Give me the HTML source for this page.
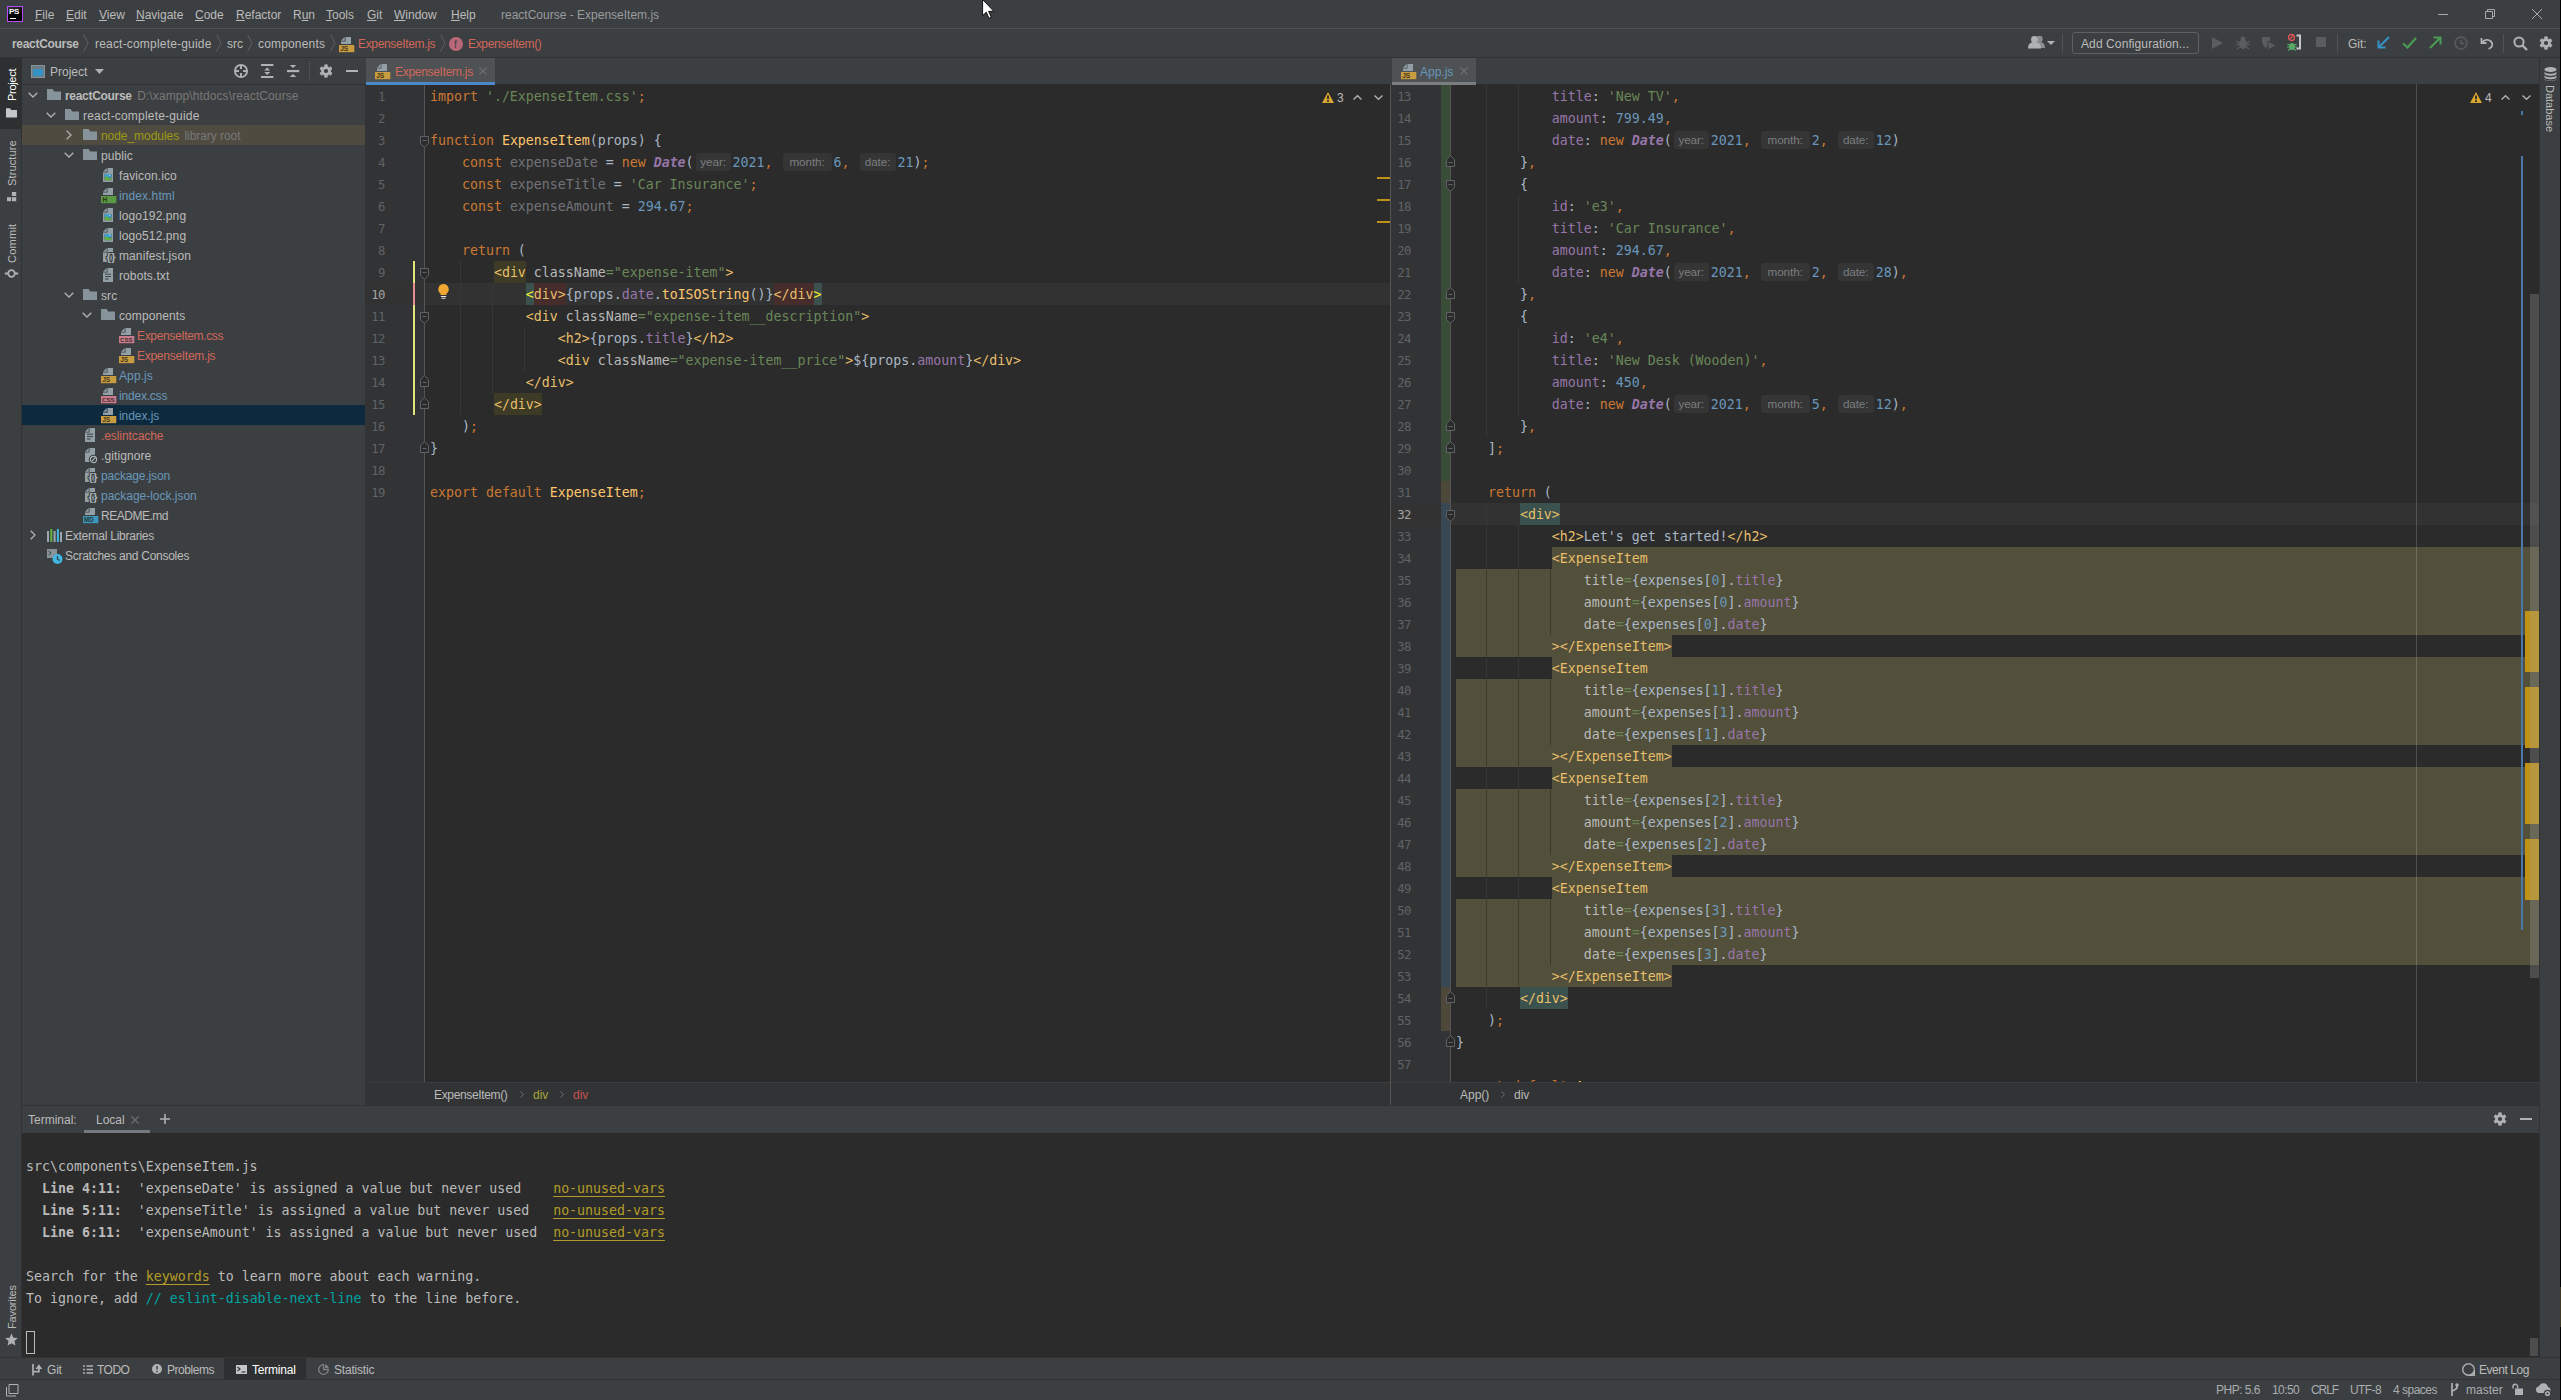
<!DOCTYPE html><html><head><meta charset="utf-8"><title>reactCourse - ExpenseItem.js</title><style>
*{box-sizing:border-box;margin:0;padding:0}
html,body{width:2561px;height:1400px;overflow:hidden;background:#3c3f41}
body{position:relative;font-family:"Liberation Sans",sans-serif;font-size:12px;color:#bbbbbb;line-height:1}
.a{position:absolute}
.t{position:absolute;white-space:pre;line-height:16px;height:16px}
.mono{font-family:"Liberation Mono",monospace;font-size:13.333px}
.cl{position:absolute;white-space:pre;font-family:"DejaVu Sans Mono","Liberation Mono",monospace;font-size:13.288px;line-height:22px;height:22px;color:#a9b7c6;padding-top:1px}
.ln{position:absolute;white-space:pre;font-family:"DejaVu Sans Mono","Liberation Mono",monospace;font-size:12.3px;line-height:22px;height:22px;color:#606366;text-align:right;padding-top:1px;letter-spacing:-0.5px}
.k{color:#cc7832}.s{color:#6a8759}.n{color:#6897bb}.f{color:#ffc66d}.p{color:#9876aa}.tg{color:#e8bf6a}
.u{color:#72737a}.at{color:#bababa}.g{color:#9876aa;font-style:italic;font-weight:bold}
.h{display:inline-block;vertical-align:top;margin:1px 2px 0 2px;height:18px;line-height:17px;border-radius:3px;background:#353535;color:#7c7e80;font-family:"Liberation Sans",sans-serif;font-size:11.7px;letter-spacing:-0.1px;text-align:center;overflow:hidden}
.tr{position:absolute;white-space:pre;line-height:20px;height:20px;font-size:12px;letter-spacing:0.1px}
svg{position:absolute;overflow:visible}
</style></head><body><div class="a" style="left:0px;top:0px;width:2561px;height:28px;background:#3c3f41;"></div><div class="a" style="left:0px;top:28px;width:2561px;height:1px;background:#515151;"></div><div class="a" style="left:0px;top:29px;width:2561px;height:28px;background:#3c3f41;"></div><div class="a" style="left:0px;top:57px;width:2561px;height:1px;background:#323232;"></div><div class="a" style="left:7px;top:6px;width:16px;height:16px;background:linear-gradient(160deg,#3a3a3a 0%,#000 55%);border:1px solid #b74af7"></div><div class="t" style="left:9px;top:7px;color:#ffffff;font-size:8px;font-weight:bold;line-height:9px;height:9px;letter-spacing:-0.3px">PS</div><div class="a" style="left:10px;top:18px;width:6px;height:1px;background:#ffffff;"></div><div class="t" style="left:35px;top:7px;color:#bbbbbb;"><u>F</u>ile</div><div class="t" style="left:66px;top:7px;color:#bbbbbb;"><u>E</u>dit</div><div class="t" style="left:99px;top:7px;color:#bbbbbb;"><u>V</u>iew</div><div class="t" style="left:136px;top:7px;color:#bbbbbb;"><u>N</u>avigate</div><div class="t" style="left:195px;top:7px;color:#bbbbbb;"><u>C</u>ode</div><div class="t" style="left:236px;top:7px;color:#bbbbbb;"><u>R</u>efactor</div><div class="t" style="left:293px;top:7px;color:#bbbbbb;">R<u>u</u>n</div><div class="t" style="left:326px;top:7px;color:#bbbbbb;"><u>T</u>ools</div><div class="t" style="left:367px;top:7px;color:#bbbbbb;"><u>G</u>it</div><div class="t" style="left:394px;top:7px;color:#bbbbbb;"><u>W</u>indow</div><div class="t" style="left:451px;top:7px;color:#bbbbbb;"><u>H</u>elp</div><div class="t" style="left:501px;top:7px;color:#999c9e;">reactCourse - ExpenseItem.js</div><div class="a" style="left:2438px;top:14px;width:10px;height:1px;background:#a8aaab;"></div><svg style="left:2485px;top:9px" width="10" height="10" viewBox="0 0 10 10"><path d="M0.5 2.5h7v7h-7z M2.5 2.5v-2h7v7h-2" fill="none" stroke="#a8aaab" stroke-width="1"/></svg><svg style="left:2532px;top:9px" width="10" height="10" viewBox="0 0 10 10"><path d="M0 0L10 10M10 0L0 10" fill="none" stroke="#a8aaab" stroke-width="1"/></svg><div class="t" style="left:12px;top:36px;color:#bbbbbb;font-weight:bold;letter-spacing:-0.3px">reactCourse</div><svg style="left:83px;top:34px" width="6" height="18" viewBox="0 0 6 18"><path d="M0.5 0.5L5 9L0.5 17.5" fill="none" stroke="#5d6163" stroke-width="1"/></svg><div class="t" style="left:95px;top:36px;color:#bbbbbb;letter-spacing:0.19px">react-complete-guide</div><svg style="left:216px;top:34px" width="6" height="18" viewBox="0 0 6 18"><path d="M0.5 0.5L5 9L0.5 17.5" fill="none" stroke="#5d6163" stroke-width="1"/></svg><div class="t" style="left:227px;top:36px;color:#bbbbbb;">src</div><svg style="left:247px;top:34px" width="6" height="18" viewBox="0 0 6 18"><path d="M0.5 0.5L5 9L0.5 17.5" fill="none" stroke="#5d6163" stroke-width="1"/></svg><div class="t" style="left:258px;top:36px;color:#bbbbbb;letter-spacing:0.17px">components</div><svg style="left:330px;top:34px" width="6" height="18" viewBox="0 0 6 18"><path d="M0.5 0.5L5 9L0.5 17.5" fill="none" stroke="#5d6163" stroke-width="1"/></svg><svg style="left:339px;top:37px" width="16" height="16" viewBox="0 0 16 16"><path d="M5.700 0L2 3.700h3.700z" fill="#929fa7"/><path d="M6.500 0h5.500v7H2V4.500h4.500z" fill="#929fa7"/><rect x="0" y="8" width="15.300" height="7.200" fill="#c99c3f"/><text x="1.2" y="14.100" font-family="Liberation Sans,sans-serif" font-size="6.6" font-weight="bold" fill="#2b2418" opacity=".85">JS</text></svg><div class="t" style="left:358px;top:36px;color:#d1675a;letter-spacing:-0.35px">ExpenseItem.js</div><svg style="left:440px;top:34px" width="6" height="18" viewBox="0 0 6 18"><path d="M0.5 0.5L5 9L0.5 17.5" fill="none" stroke="#5d6163" stroke-width="1"/></svg><svg style="left:449px;top:37px" width="14" height="14" viewBox="0 0 14 14"><circle cx="7" cy="7" r="7" fill="#b9687a"/><text x="5" y="10.5" font-family="Liberation Sans,sans-serif" font-size="10" fill="#3c3f41">f</text></svg><div class="t" style="left:468px;top:36px;color:#d1675a;letter-spacing:-0.35px">ExpenseItem()</div><svg style="left:2028px;top:35px" width="18" height="14" viewBox="0 0 18 14"><circle cx="11.5" cy="4" r="3.2" fill="#8b8e90"/><path d="M6 13c0-4 2-6 5.5-6s5.5 2 5.5 6z" fill="#8b8e90"/><circle cx="6.5" cy="4.5" r="3.4" fill="#afb1b3"/><path d="M0 13.5c0-4.5 2.5-6.5 6.5-6.5s6.500 2 6.500 6.500z" fill="#afb1b3"/></svg><svg style="left:2047px;top:41px" width="8" height="4" viewBox="0 0 8 4"><path d="M0 0h8L4 4z" fill="#afb1b3"/></svg><div class="a" style="left:2062px;top:34px;width:1px;height:19px;background:#515456;"></div><div class="a" style="left:2072px;top:32px;width:127px;height:22px;border:1px solid #5e6060;border-radius:3px"></div><div class="t" style="left:2081px;top:36px;color:#bbbbbb;letter-spacing:0.1px">Add Configuration...</div><svg style="left:2212px;top:37px" width="11" height="12" viewBox="0 0 11 12"><path d="M0 0L11 6L0 12z" fill="#5a5d5f"/></svg><svg style="left:2236px;top:36px" width="14" height="14" viewBox="0 0 14 14"><ellipse cx="7" cy="8" rx="4" ry="5" fill="#5a5d5f"/><circle cx="7" cy="3" r="2.4" fill="#5a5d5f"/><path d="M0 5l3 2M14 5l-3 2M0 8.500h14M1 13l2.500-2M13 13l-2.500-2" stroke="#5a5d5f" stroke-width="1.200" fill="none"/></svg><svg style="left:2261px;top:36px" width="15" height="14" viewBox="0 0 15 14"><path d="M1 1h8v5L5 12C2 10 1 7 1 4z" fill="#5a5d5f"/><path d="M7 5l8 4.500L7 14z" fill="#5a5d5f" stroke="#3c3f41" stroke-width="1"/></svg><svg style="left:2287px;top:34px" width="15" height="17" viewBox="0 0 15 17"><circle cx="4.500" cy="3.500" r="3" fill="none" stroke="#e05555" stroke-width="1.300"/><path d="M2.500 5.500l4-4" stroke="#e05555" stroke-width="1.200"/><ellipse cx="5" cy="12.500" rx="3" ry="3.500" fill="#59a869"/><path d="M0.500 10l2.500 1.500M9.500 10L7 11.500M0 13h10M1 16.500l2-1.500M9 16.500L7 15" stroke="#59a869" stroke-width="1.100" fill="none"/><path d="M9.500 1.500h3.500v13H9.500" fill="none" stroke="#c4c6c7" stroke-width="2"/></svg><div class="a" style="left:2316px;top:37px;width:10px;height:10px;background:#5a5d5f;"></div><div class="a" style="left:2337px;top:34px;width:1px;height:19px;background:#515456;"></div><div class="t" style="left:2348px;top:36px;color:#bbbbbb;">Git:</div><svg style="left:2377px;top:36px" width="13" height="13" viewBox="0 0 13 13"><path d="M12 1L2.500 10.500M1.500 4.500V11.500H8.500" fill="none" stroke="#3592c4" stroke-width="2"/></svg><svg style="left:2402px;top:37px" width="15" height="12" viewBox="0 0 15 12"><path d="M1 6.500L5.500 10.500L14 1" fill="none" stroke="#499c54" stroke-width="2.200"/></svg><svg style="left:2429px;top:36px" width="13" height="13" viewBox="0 0 13 13"><path d="M1 12L10.500 2.500M4.500 1.500H11.500V8.500" fill="none" stroke="#499c54" stroke-width="2"/></svg><svg style="left:2454px;top:36px" width="14" height="14" viewBox="0 0 14 14"><circle cx="7" cy="7" r="6" fill="none" stroke="#5a5d5f" stroke-width="1.500"/><path d="M7 3.500V7.500H10.500" fill="none" stroke="#5a5d5f" stroke-width="1.300"/></svg><svg style="left:2480px;top:36px" width="14" height="14" viewBox="0 0 14 14"><path d="M1.500 2v5h5" fill="none" stroke="#afb1b3" stroke-width="1.800"/><path d="M2 6.500C4 3.500 8.500 3 11 5.500S12.500 12 8.500 12.800" fill="none" stroke="#afb1b3" stroke-width="1.800"/></svg><div class="a" style="left:2503px;top:34px;width:1px;height:19px;background:#515456;"></div><svg style="left:2513px;top:36px" width="15" height="15" viewBox="0 0 15 15"><circle cx="6" cy="6" r="4.600" fill="none" stroke="#afb1b3" stroke-width="2"/><path d="M9.500 9.500L14 14" stroke="#afb1b3" stroke-width="2.400"/></svg><svg style="left:2539px;top:36px" width="14" height="14" viewBox="0 0 14 14"><path d="M5.67 2.60L5.69 0.84L8.31 0.84L8.33 2.60L10.15 3.65L11.68 2.78L12.99 5.05L11.48 5.95L11.48 8.05L12.99 8.95L11.68 11.22L10.15 10.35L8.33 11.40L8.31 13.16L5.69 13.16L5.67 11.40L3.85 10.35L2.32 11.22L1.01 8.95L2.52 8.05L2.52 5.95L1.01 5.05L2.32 2.78L3.85 3.65z" fill="#afb1b3" stroke="#afb1b3" stroke-width="0.8" stroke-linejoin="round"/><circle cx="7" cy="7" r="2.1" fill="#3c3f41"/></svg><div class="a" style="left:0px;top:58px;width:21px;height:1300px;background:#3c3f41;"></div><div class="a" style="left:21px;top:58px;width:1px;height:1300px;background:#323232;"></div><div class="a" style="left:0px;top:58px;width:22px;height:71px;background:#2d2f30;"></div><div class="t" style="left:12px;top:101px;color:#ffffff;transform-origin:0 0;transform:rotate(-90deg) translateY(-8px);font-size:11px;letter-spacing:-0.3px">Project</div><svg style="left:6px;top:108px" width="11" height="10" viewBox="0 0 11 10"><path d="M0 0.300h4l1.300 1.700H11V9.500H0z" fill="#c4c6c7"/></svg><div class="t" style="left:12px;top:186px;color:#bbbbbb;transform-origin:0 0;transform:rotate(-90deg) translateY(-8px);font-size:11px;letter-spacing:0.13px">Structure</div><svg style="left:7px;top:192px" width="10" height="10" viewBox="0 0 10 10"><rect x="4.900" y="0" width="4.300" height="4" fill="#afb1b3"/><rect x="0" y="5.200" width="4.100" height="4" fill="#afb1b3"/><rect x="4.900" y="5.200" width="4.300" height="4" fill="#afb1b3"/></svg><div class="t" style="left:12px;top:263px;color:#bbbbbb;transform-origin:0 0;transform:rotate(-90deg) translateY(-8px);font-size:11px;letter-spacing:0.25px">Commit</div><svg style="left:4px;top:268px" width="15" height="11" viewBox="0 0 15 11"><circle cx="7.500" cy="5.500" r="3.300" fill="none" stroke="#afb1b3" stroke-width="1.800"/><path d="M0.800 5.500h3.400M10.800 5.500h3.400" stroke="#afb1b3" stroke-width="1.800"/></svg><div class="t" style="left:12px;top:1329px;color:#bbbbbb;transform-origin:0 0;transform:rotate(-90deg) translateY(-8px);font-size:11px;letter-spacing:-0.15px">Favorites</div><svg style="left:5px;top:1333px" width="13" height="13" viewBox="0 0 14 14"><path d="M7 0.500l2 4.500 4.800 0.500-3.600 3.200 1 4.800L7 11l-4.200 2.500 1-4.800L0.200 5.500 5 5z" fill="#afb1b3"/></svg><div class="a" style="left:22px;top:58px;width:343px;height:27px;background:#3c3f41;"></div><div class="a" style="left:22px;top:84px;width:343px;height:1px;background:#323232;"></div><div class="a" style="left:22px;top:85px;width:343px;height:1020px;background:#3c3f41;"></div><svg style="left:31px;top:65px" width="14" height="13" viewBox="0 0 14 13"><rect x="0.500" y="0.500" width="13" height="12" fill="#6e7a82" stroke="#87939a"/><rect x="2" y="4" width="10" height="7" fill="#3592c4"/></svg><div class="t" style="left:50px;top:64px;color:#bbbbbb;">Project</div><svg style="left:95px;top:69px" width="9" height="5" viewBox="0 0 9 5"><path d="M0 0h9L4.500 5z" fill="#afb1b3"/></svg><svg style="left:234px;top:64px" width="14" height="14" viewBox="0 0 14 14"><circle cx="7" cy="7" r="6.100" fill="none" stroke="#afb1b3" stroke-width="1.900"/><path d="M7 1v4M7 9v4M1 7h4M9 7h4" stroke="#afb1b3" stroke-width="2"/></svg><svg style="left:261px;top:64px" width="12" height="14" viewBox="0 0 12 14"><path d="M0 1.100h12.400M0 13h12.400" stroke="#afb1b3" stroke-width="2"/><path d="M6.200 3.500L9.200 6.400H3.200z M6.200 10.900L9.200 8H3.200z" fill="#afb1b3"/></svg><svg style="left:287px;top:64px" width="12" height="14" viewBox="0 0 12 14"><path d="M0 7.050h12.200" stroke="#afb1b3" stroke-width="2.200"/><path d="M6 4.100L9.300 1H2.700z M6 10L9.300 13.100H2.700z" fill="#afb1b3"/></svg><div class="a" style="left:309px;top:61px;width:1px;height:20px;background:#4b4e50;"></div><svg style="left:319px;top:64px" width="14" height="14" viewBox="0 0 14 14"><path d="M5.67 2.60L5.69 0.84L8.31 0.84L8.33 2.60L10.15 3.65L11.68 2.78L12.99 5.05L11.48 5.95L11.48 8.05L12.99 8.95L11.68 11.22L10.15 10.35L8.33 11.40L8.31 13.16L5.69 13.16L5.67 11.40L3.85 10.35L2.32 11.22L1.01 8.95L2.52 8.05L2.52 5.95L1.01 5.05L2.32 2.78L3.85 3.65z" fill="#afb1b3" stroke="#afb1b3" stroke-width="0.8" stroke-linejoin="round"/><circle cx="7" cy="7" r="2.1" fill="#3c3f41"/></svg><div class="a" style="left:346px;top:70px;width:12px;height:2px;background:#afb1b3;"></div><svg style="left:28px;top:92px" width="10" height="6" viewBox="0 0 10 6"><path d="M0.7 0.7L5 5L9.3 0.7" fill="none" stroke="#afb1b3" stroke-width="1.3"/></svg><svg style="left:47px;top:88px" width="16" height="16" viewBox="0 0 16 16"><path d="M0 1h5.600l1.600 2.600H14V12H0z" fill="#87939a"/></svg><div class="tr" style="left:65px;top:86px;color:#bbbbbb;"><b style="letter-spacing:-0.3px">reactCourse</b><span style="color:#787878;margin-left:2px"> D:\xampp\htdocs\reactCourse</span></div><svg style="left:46px;top:112px" width="10" height="6" viewBox="0 0 10 6"><path d="M0.7 0.7L5 5L9.3 0.7" fill="none" stroke="#afb1b3" stroke-width="1.3"/></svg><svg style="left:65px;top:108px" width="16" height="16" viewBox="0 0 16 16"><path d="M0 1h5.600l1.600 2.600H14V12H0z" fill="#87939a"/></svg><div class="tr" style="left:83px;top:106px;color:#bbbbbb;letter-spacing:0.19px">react-complete-guide</div><div class="a" style="left:22px;top:125px;width:343px;height:20px;background:#4f4b41;"></div><svg style="left:66px;top:130px" width="6" height="10" viewBox="0 0 6 10"><path d="M0.7 0.7L5 5L0.7 9.3" fill="none" stroke="#afb1b3" stroke-width="1.3"/></svg><svg style="left:83px;top:128px" width="16" height="16" viewBox="0 0 16 16"><path d="M0 1h5.600l1.600 2.600H14V12H0z" fill="#87939a"/></svg><div class="tr" style="left:101px;top:126px;color:#9c9b14;letter-spacing:-0.05px">node_modules<span style="color:#787878;margin-left:2px"> library root</span></div><svg style="left:64px;top:152px" width="10" height="6" viewBox="0 0 10 6"><path d="M0.7 0.7L5 5L9.3 0.7" fill="none" stroke="#afb1b3" stroke-width="1.3"/></svg><svg style="left:83px;top:148px" width="16" height="16" viewBox="0 0 16 16"><path d="M0 1h5.600l1.600 2.600H14V12H0z" fill="#87939a"/></svg><div class="tr" style="left:101px;top:146px;color:#bbbbbb;">public</div><svg style="left:101px;top:168px" width="16" height="16" viewBox="0 0 16 16"><path d="M5.700 0L2 3.700h3.700z" fill="#929fa7"/><path d="M6.500 0h5.500v14H2V4.500h4.500z" fill="#929fa7"/><rect x="3" y="5" width="8" height="8" fill="#929fa7"/><rect x="3.700" y="6" width="6.600" height="6.200" fill="#3c3f41"/><rect x="3.700" y="6" width="6.600" height="3.600" fill="#3a9fd0"/><path d="M3.700 12.200V9.500c1.500-1.300 2.500-1.300 3.500-0.300 1 0.900 2 1 3.100 0.200v2.800z" fill="#5fae45"/><circle cx="8.500" cy="7.300" r="0.700" fill="#a5d6ee"/></svg><div class="tr" style="left:119px;top:166px;color:#bbbbbb;">favicon.ico</div><svg style="left:101px;top:188px" width="16" height="16" viewBox="0 0 16 16"><path d="M5.700 0L2 3.700h3.700z" fill="#929fa7"/><path d="M6.500 0h5.500v7H2V4.500h4.500z" fill="#929fa7"/><rect x="0" y="8" width="15.300" height="7.200" fill="#5a9a42"/><text x="1.6" y="14.100" font-family="Liberation Sans,sans-serif" font-size="6.6" font-weight="bold" fill="#2b2418" opacity=".85">H</text></svg><div class="tr" style="left:119px;top:186px;color:#6897bb;">index.html</div><svg style="left:101px;top:208px" width="16" height="16" viewBox="0 0 16 16"><path d="M5.700 0L2 3.700h3.700z" fill="#929fa7"/><path d="M6.500 0h5.500v14H2V4.500h4.500z" fill="#929fa7"/><rect x="3" y="5" width="8" height="8" fill="#929fa7"/><rect x="3.700" y="6" width="6.600" height="6.200" fill="#3c3f41"/><rect x="3.700" y="6" width="6.600" height="3.600" fill="#3a9fd0"/><path d="M3.700 12.200V9.500c1.500-1.300 2.500-1.300 3.500-0.300 1 0.900 2 1 3.100 0.200v2.800z" fill="#5fae45"/><circle cx="8.500" cy="7.300" r="0.700" fill="#a5d6ee"/></svg><div class="tr" style="left:119px;top:206px;color:#bbbbbb;">logo192.png</div><svg style="left:101px;top:228px" width="16" height="16" viewBox="0 0 16 16"><path d="M5.700 0L2 3.700h3.700z" fill="#929fa7"/><path d="M6.500 0h5.500v14H2V4.500h4.500z" fill="#929fa7"/><rect x="3" y="5" width="8" height="8" fill="#929fa7"/><rect x="3.700" y="6" width="6.600" height="6.200" fill="#3c3f41"/><rect x="3.700" y="6" width="6.600" height="3.600" fill="#3a9fd0"/><path d="M3.700 12.200V9.500c1.500-1.300 2.500-1.300 3.500-0.300 1 0.900 2 1 3.100 0.200v2.800z" fill="#5fae45"/><circle cx="8.500" cy="7.300" r="0.700" fill="#a5d6ee"/></svg><div class="tr" style="left:119px;top:226px;color:#bbbbbb;">logo512.png</div><svg style="left:101px;top:248px" width="16" height="16" viewBox="0 0 16 16"><path d="M5.700 0L2 3.700h3.700z" fill="#929fa7"/><path d="M6.500 0h5.500v14H2V4.500h4.500z" fill="#929fa7"/><text x="5.400" y="13.200" font-family="Liberation Sans,sans-serif" font-size="11" font-weight="bold" fill="#aab5bc" stroke="#3c3f41" stroke-width="2.200" paint-order="stroke" letter-spacing="0.500">{}</text></svg><div class="tr" style="left:119px;top:246px;color:#bbbbbb;">manifest.json</div><svg style="left:101px;top:268px" width="16" height="16" viewBox="0 0 16 16"><path d="M5.700 0L2 3.700h3.700z" fill="#929fa7"/><path d="M6.500 0h5.500v14H2V4.500h4.500z" fill="#929fa7"/><path d="M4 6.200h6M4 8.600h6M4 11h3.600" stroke="#3c3f41" stroke-width="1" fill="none"/></svg><div class="tr" style="left:119px;top:266px;color:#bbbbbb;">robots.txt</div><svg style="left:64px;top:292px" width="10" height="6" viewBox="0 0 10 6"><path d="M0.7 0.7L5 5L9.3 0.7" fill="none" stroke="#afb1b3" stroke-width="1.3"/></svg><svg style="left:83px;top:288px" width="16" height="16" viewBox="0 0 16 16"><path d="M0 1h5.600l1.600 2.600H14V12H0z" fill="#87939a"/></svg><div class="tr" style="left:101px;top:286px;color:#bbbbbb;">src</div><svg style="left:82px;top:312px" width="10" height="6" viewBox="0 0 10 6"><path d="M0.7 0.7L5 5L9.3 0.7" fill="none" stroke="#afb1b3" stroke-width="1.3"/></svg><svg style="left:101px;top:308px" width="16" height="16" viewBox="0 0 16 16"><path d="M0 1h5.600l1.600 2.600H14V12H0z" fill="#87939a"/></svg><div class="tr" style="left:119px;top:306px;color:#bbbbbb;">components</div><svg style="left:119px;top:328px" width="16" height="16" viewBox="0 0 16 16"><path d="M5.700 0L2 3.700h3.700z" fill="#929fa7"/><path d="M6.500 0h5.500v7H2V4.500h4.500z" fill="#929fa7"/><rect x="0" y="8" width="15.300" height="7.200" fill="#c87b8c"/><text x="1.0" y="14.100" font-family="Liberation Sans,sans-serif" font-size="6.1" font-weight="bold" fill="#2b2418" opacity=".85">CSS</text></svg><div class="tr" style="left:137px;top:326px;color:#d1675a;letter-spacing:-0.35px">ExpenseItem.css</div><svg style="left:119px;top:348px" width="16" height="16" viewBox="0 0 16 16"><path d="M5.700 0L2 3.700h3.700z" fill="#929fa7"/><path d="M6.500 0h5.500v7H2V4.500h4.500z" fill="#929fa7"/><rect x="0" y="8" width="15.300" height="7.200" fill="#c99c3f"/><text x="1.2" y="14.100" font-family="Liberation Sans,sans-serif" font-size="6.6" font-weight="bold" fill="#2b2418" opacity=".85">JS</text></svg><div class="tr" style="left:137px;top:346px;color:#d1675a;letter-spacing:-0.27px">ExpenseItem.js</div><svg style="left:101px;top:368px" width="16" height="16" viewBox="0 0 16 16"><path d="M5.700 0L2 3.700h3.700z" fill="#929fa7"/><path d="M6.500 0h5.500v7H2V4.500h4.500z" fill="#929fa7"/><rect x="0" y="8" width="15.300" height="7.200" fill="#c99c3f"/><text x="1.2" y="14.100" font-family="Liberation Sans,sans-serif" font-size="6.6" font-weight="bold" fill="#2b2418" opacity=".85">JS</text></svg><div class="tr" style="left:119px;top:366px;color:#6897bb;">App.js</div><svg style="left:101px;top:388px" width="16" height="16" viewBox="0 0 16 16"><path d="M5.700 0L2 3.700h3.700z" fill="#929fa7"/><path d="M6.500 0h5.500v7H2V4.500h4.500z" fill="#929fa7"/><rect x="0" y="8" width="15.300" height="7.200" fill="#c87b8c"/><text x="1.0" y="14.100" font-family="Liberation Sans,sans-serif" font-size="6.1" font-weight="bold" fill="#2b2418" opacity=".85">CSS</text></svg><div class="tr" style="left:119px;top:386px;color:#6897bb;letter-spacing:-0.2px">index.css</div><div class="a" style="left:22px;top:405px;width:343px;height:20px;background:#0d293e;"></div><svg style="left:101px;top:408px" width="16" height="16" viewBox="0 0 16 16"><path d="M5.700 0L2 3.700h3.700z" fill="#929fa7"/><path d="M6.500 0h5.500v7H2V4.500h4.500z" fill="#929fa7"/><rect x="0" y="8" width="15.300" height="7.200" fill="#c99c3f"/><text x="1.2" y="14.100" font-family="Liberation Sans,sans-serif" font-size="6.6" font-weight="bold" fill="#2b2418" opacity=".85">JS</text></svg><div class="tr" style="left:119px;top:406px;color:#6897bb;letter-spacing:-0.05px">index.js</div><svg style="left:83px;top:428px" width="16" height="16" viewBox="0 0 16 16"><path d="M5.700 0L2 3.700h3.700z" fill="#929fa7"/><path d="M6.500 0h5.500v14H2V4.500h4.500z" fill="#929fa7"/><path d="M4 6.200h6M4 8.600h6M4 11h3.600" stroke="#3c3f41" stroke-width="1" fill="none"/></svg><div class="tr" style="left:101px;top:426px;color:#d1675a;letter-spacing:-0.08px">.eslintcache</div><svg style="left:83px;top:448px" width="16" height="16" viewBox="0 0 16 16"><path d="M5.700 0L2 3.700h3.700z" fill="#929fa7"/><path d="M6.500 0h5.500v14H2V4.500h4.500z" fill="#929fa7"/><circle cx="10.500" cy="11.500" r="4.700" fill="#3c3f41"/><circle cx="10.500" cy="11.500" r="3.100" fill="none" stroke="#aab5bc" stroke-width="1.100"/><path d="M8.400 13.600l4.200-4.200" stroke="#aab5bc" stroke-width="1.100"/></svg><div class="tr" style="left:101px;top:446px;color:#bbbbbb;">.gitignore</div><svg style="left:83px;top:468px" width="16" height="16" viewBox="0 0 16 16"><path d="M5.700 0L2 3.700h3.700z" fill="#929fa7"/><path d="M6.500 0h5.500v14H2V4.500h4.500z" fill="#929fa7"/><text x="5.400" y="13.200" font-family="Liberation Sans,sans-serif" font-size="11" font-weight="bold" fill="#aab5bc" stroke="#3c3f41" stroke-width="2.200" paint-order="stroke" letter-spacing="0.500">{}</text></svg><div class="tr" style="left:101px;top:466px;color:#6897bb;letter-spacing:-0.14px">package.json</div><svg style="left:83px;top:488px" width="16" height="16" viewBox="0 0 16 16"><path d="M5.700 0L2 3.700h3.700z" fill="#929fa7"/><path d="M6.500 0h5.500v14H2V4.500h4.500z" fill="#929fa7"/><text x="5.400" y="13.200" font-family="Liberation Sans,sans-serif" font-size="11" font-weight="bold" fill="#aab5bc" stroke="#3c3f41" stroke-width="2.200" paint-order="stroke" letter-spacing="0.500">{}</text></svg><div class="tr" style="left:101px;top:486px;color:#6897bb;letter-spacing:-0.02px">package-lock.json</div><svg style="left:83px;top:508px" width="16" height="16" viewBox="0 0 16 16"><path d="M5.700 0L2 3.700h3.700z" fill="#929fa7"/><path d="M6.500 0h5.500v7H2V4.500h4.500z" fill="#929fa7"/><rect x="0" y="8" width="15.300" height="7.200" fill="#3a98bd"/><text x="1.0" y="14.100" font-family="Liberation Sans,sans-serif" font-size="6.3" font-weight="bold" fill="#2b2418" opacity=".85">MD</text></svg><div class="tr" style="left:101px;top:506px;color:#bbbbbb;letter-spacing:-0.48px">README.md</div><svg style="left:30px;top:530px" width="6" height="10" viewBox="0 0 6 10"><path d="M0.7 0.7L5 5L0.7 9.3" fill="none" stroke="#afb1b3" stroke-width="1.3"/></svg><svg style="left:47px;top:529px" width="15" height="13" viewBox="0 0 15 13"><rect x="0" y="2" width="2" height="11" fill="#9aa7b0"/><rect x="3.300" y="0" width="2" height="13" fill="#62b543"/><rect x="6.600" y="2" width="2" height="11" fill="#9aa7b0"/><rect x="9.900" y="0" width="2" height="13" fill="#40b6e0"/><rect x="13" y="3" width="2" height="10" fill="#9aa7b0"/></svg><div class="tr" style="left:65px;top:526px;color:#bbbbbb;letter-spacing:-0.24px">External Libraries</div><svg style="left:47px;top:548px" width="16" height="16" viewBox="0 0 16 16"><rect x="0" y="1" width="10" height="9" fill="#9aa7b0" opacity=".8"/><path d="M1.500 3l2.500 2-2.500 2" fill="none" stroke="#3c3f41" stroke-width="1"/><circle cx="10.500" cy="11" r="5" fill="#40b6e0"/><path d="M10.500 8v3.200l2 1.200" fill="none" stroke="#3c3f41" stroke-width="1.200"/></svg><div class="tr" style="left:65px;top:546px;color:#bbbbbb;letter-spacing:-0.27px">Scratches and Consoles</div><div class="a" style="left:365px;top:58px;width:2196px;height:26px;background:#3c3f41;"></div><div class="a" style="left:366px;top:58px;width:129px;height:24px;background:#4e5254;"></div><div class="a" style="left:366px;top:82px;width:129px;height:3px;background:#4a88c7;"></div><svg style="left:375px;top:64px" width="16" height="16" viewBox="0 0 16 16"><path d="M5.700 0L2 3.700h3.700z" fill="#929fa7"/><path d="M6.500 0h5.500v7H2V4.500h4.500z" fill="#929fa7"/><rect x="0" y="8" width="15.300" height="7.200" fill="#c99c3f"/><text x="1.2" y="14.100" font-family="Liberation Sans,sans-serif" font-size="6.6" font-weight="bold" fill="#2b2418" opacity=".85">JS</text></svg><div class="t" style="left:395px;top:64px;color:#d1675a;letter-spacing:-0.3px">ExpenseItem.js</div><svg style="left:479px;top:67px" width="8" height="8" viewBox="0 0 8 8"><path d="M0.500 0.500L7.500 7.500M7.500 0.500L0.500 7.500" stroke="#6e7173" stroke-width="1.100" fill="none"/></svg><div class="a" style="left:1392px;top:58px;width:84px;height:24px;background:#4e5254;"></div><div class="a" style="left:1392px;top:82px;width:84px;height:3px;background:#7a7e80;"></div><svg style="left:1401px;top:64px" width="16" height="16" viewBox="0 0 16 16"><path d="M5.700 0L2 3.700h3.700z" fill="#929fa7"/><path d="M6.500 0h5.500v7H2V4.500h4.500z" fill="#929fa7"/><rect x="0" y="8" width="15.300" height="7.200" fill="#c99c3f"/><text x="1.2" y="14.100" font-family="Liberation Sans,sans-serif" font-size="6.6" font-weight="bold" fill="#2b2418" opacity=".85">JS</text></svg><div class="t" style="left:1420px;top:64px;color:#6897bb;">App.js</div><svg style="left:1460px;top:67px" width="8" height="8" viewBox="0 0 8 8"><path d="M0.500 0.500L7.500 7.500M7.500 0.500L0.500 7.500" stroke="#6e7173" stroke-width="1.100" fill="none"/></svg><div class="a" style="left:365px;top:84px;width:1025px;height:998px;background:#2b2b2b;"></div><div class="a" style="left:365px;top:84px;width:59px;height:998px;background:#313335;"></div><div class="a" style="left:365px;top:283px;width:1025px;height:22px;background:#323232;"></div><div class="a" style="left:424px;top:84px;width:1px;height:998px;background:#555555;"></div><div class="a" style="left:460px;top:261px;width:1px;height:154px;background:#373737;"></div><div class="a" style="left:492px;top:283px;width:1px;height:110px;background:#373737;"></div><div class="a" style="left:524px;top:327px;width:1px;height:44px;background:#373737;"></div><div class="a" style="left:494px;top:261px;width:32px;height:22px;background:#3d3b26;"></div><div class="a" style="left:494px;top:393px;width:48px;height:22px;background:#3d3b26;"></div><div class="a" style="left:526px;top:283px;width:8px;height:22px;background:#3b514d;"></div><div class="a" style="left:534px;top:283px;width:32px;height:22px;background:#472c2c;"></div><div class="a" style="left:774px;top:283px;width:40px;height:22px;background:#472c2c;"></div><div class="a" style="left:814px;top:283px;width:8px;height:22px;background:#3b514d;"></div><div class="a" style="left:413px;top:261px;width:2px;height:22px;background:#e2e37b;"></div><div class="a" style="left:413px;top:283px;width:2px;height:22px;background:#e78c8f;"></div><div class="a" style="left:413px;top:305px;width:2px;height:110px;background:#e2e37b;"></div><div class="ln" style="left:345px;top:85px;width:40px;color:#606366">1</div><div class="cl" style="left:430px;top:85px"><span class="k">import </span><span class="s">'./ExpenseItem.css'</span><span class="k">;</span></div><div class="ln" style="left:345px;top:107px;width:40px;color:#606366">2</div><div class="ln" style="left:345px;top:129px;width:40px;color:#606366">3</div><div class="cl" style="left:430px;top:129px"><span class="k">function </span><span class="f">ExpenseItem</span>(props) {</div><div class="ln" style="left:345px;top:151px;width:40px;color:#606366">4</div><div class="cl" style="left:430px;top:151px">    <span class="k">const </span><span class="u">expenseDate</span> = <span class="k">new </span><span class="g">Date</span>(<span class="h" style="width:35px">year:</span><span class="n">2021</span><span class="k">,</span> <span class="h" style="width:49px">month:</span><span class="n">6</span><span class="k">,</span> <span class="h" style="width:36px">date:</span><span class="n">21</span>)<span class="k">;</span></div><div class="ln" style="left:345px;top:173px;width:40px;color:#606366">5</div><div class="cl" style="left:430px;top:173px">    <span class="k">const </span><span class="u">expenseTitle</span> = <span class="s">'Car Insurance'</span><span class="k">;</span></div><div class="ln" style="left:345px;top:195px;width:40px;color:#606366">6</div><div class="cl" style="left:430px;top:195px">    <span class="k">const </span><span class="u">expenseAmount</span> = <span class="n">294.67</span><span class="k">;</span></div><div class="ln" style="left:345px;top:217px;width:40px;color:#606366">7</div><div class="ln" style="left:345px;top:239px;width:40px;color:#606366">8</div><div class="cl" style="left:430px;top:239px">    <span class="k">return </span>(</div><div class="ln" style="left:345px;top:261px;width:40px;color:#606366">9</div><div class="cl" style="left:430px;top:261px">        <span class="tg">&lt;div </span><span class="at">className</span><span class="s">="expense-item"</span><span class="tg">&gt;</span></div><div class="ln" style="left:345px;top:283px;width:40px;color:#a4a3a3">10</div><div class="cl" style="left:430px;top:283px">            <span style="color:#ffef28">&lt;</span><span class="tg">div&gt;</span>{props.<span class="p">date</span>.<span class="f">toISOString</span>()}<span class="tg">&lt;/div</span><span style="color:#ffef28">&gt;</span></div><div class="ln" style="left:345px;top:305px;width:40px;color:#606366">11</div><div class="cl" style="left:430px;top:305px">            <span class="tg">&lt;div </span><span class="at">className</span><span class="s">="expense-item__description"</span><span class="tg">&gt;</span></div><div class="ln" style="left:345px;top:327px;width:40px;color:#606366">12</div><div class="cl" style="left:430px;top:327px">                <span class="tg">&lt;h2&gt;</span>{props.<span class="p">title</span>}<span class="tg">&lt;/h2&gt;</span></div><div class="ln" style="left:345px;top:349px;width:40px;color:#606366">13</div><div class="cl" style="left:430px;top:349px">                <span class="tg">&lt;div </span><span class="at">className</span><span class="s">="expense-item__price"</span><span class="tg">&gt;</span>${props.<span class="p">amount</span>}<span class="tg">&lt;/div&gt;</span></div><div class="ln" style="left:345px;top:371px;width:40px;color:#606366">14</div><div class="cl" style="left:430px;top:371px">            <span class="tg">&lt;/div&gt;</span></div><div class="ln" style="left:345px;top:393px;width:40px;color:#606366">15</div><div class="cl" style="left:430px;top:393px">        <span class="tg">&lt;/div&gt;</span></div><div class="ln" style="left:345px;top:415px;width:40px;color:#606366">16</div><div class="cl" style="left:430px;top:415px">    )<span class="k">;</span></div><div class="ln" style="left:345px;top:437px;width:40px;color:#606366">17</div><div class="cl" style="left:430px;top:437px">}</div><div class="ln" style="left:345px;top:459px;width:40px;color:#606366">18</div><div class="ln" style="left:345px;top:481px;width:40px;color:#606366">19</div><div class="cl" style="left:430px;top:481px"><span class="k">export default </span><span class="f">ExpenseItem</span><span class="k">;</span></div><svg style="left:420px;top:136px" width="9" height="12" viewBox="0 0 9 12"><path d="M0.500 0.500h8v7L4.500 11.300L0.500 7.500z" fill="#2b2b2b" stroke="#606366" stroke-width="1"/><path d="M2.500 4.500h4" stroke="#606366" stroke-width="1"/></svg><svg style="left:420px;top:268px" width="9" height="12" viewBox="0 0 9 12"><path d="M0.500 0.500h8v7L4.500 11.300L0.500 7.500z" fill="#2b2b2b" stroke="#606366" stroke-width="1"/><path d="M2.500 4.500h4" stroke="#606366" stroke-width="1"/></svg><svg style="left:420px;top:312px" width="9" height="12" viewBox="0 0 9 12"><path d="M0.500 0.500h8v7L4.500 11.300L0.500 7.500z" fill="#2b2b2b" stroke="#606366" stroke-width="1"/><path d="M2.500 4.500h4" stroke="#606366" stroke-width="1"/></svg><svg style="left:420px;top:375px" width="9" height="12" viewBox="0 0 9 12"><path d="M0.500 11.500h8v-7L4.500 0.700L0.500 4.500z" fill="#2b2b2b" stroke="#606366" stroke-width="1"/><path d="M2.500 7.500h4" stroke="#606366" stroke-width="1"/></svg><svg style="left:420px;top:397px" width="9" height="12" viewBox="0 0 9 12"><path d="M0.500 11.500h8v-7L4.500 0.700L0.500 4.500z" fill="#2b2b2b" stroke="#606366" stroke-width="1"/><path d="M2.500 7.500h4" stroke="#606366" stroke-width="1"/></svg><svg style="left:420px;top:441px" width="9" height="12" viewBox="0 0 9 12"><path d="M0.500 11.500h8v-7L4.500 0.700L0.500 4.500z" fill="#2b2b2b" stroke="#606366" stroke-width="1"/><path d="M2.500 7.500h4" stroke="#606366" stroke-width="1"/></svg><svg style="left:438px;top:284px" width="11" height="15" viewBox="0 0 11 15"><path d="M5.500 0a5.300 5.300 0 0 1 3 9.600V11H2.500V9.600A5.300 5.300 0 0 1 5.500 0z" fill="#f0a732"/><path d="M2.800 12.500h5.400M3.500 14.300h4" stroke="#dfe1e2" stroke-width="1.100"/></svg><svg style="left:1322px;top:92px" width="12" height="11" viewBox="0 0 12 11"><path d="M6 0L12 11H0z" fill="#d9a62e"/><path d="M6 3.500v3.800M6 8.300v1.600" stroke="#2b2b2b" stroke-width="1.800"/></svg><div class="t" style="left:1337px;top:90px;color:#bbbbbb;">3</div><svg style="left:1353px;top:95px" width="9" height="5" viewBox="0 0 9 5"><path d="M0.500 4.500L4.500 0.700L8.500 4.500" fill="none" stroke="#afb1b3" stroke-width="1.400"/></svg><svg style="left:1374px;top:95px" width="9" height="5" viewBox="0 0 9 5"><path d="M0.500 0.500L4.500 4.300L8.500 0.500" fill="none" stroke="#afb1b3" stroke-width="1.400"/></svg><div class="a" style="left:1377px;top:177px;width:13px;height:2px;background:#be9117;"></div><div class="a" style="left:1377px;top:199px;width:13px;height:2px;background:#be9117;"></div><div class="a" style="left:1377px;top:221px;width:13px;height:2px;background:#be9117;"></div><div class="a" style="left:365px;top:1082px;width:1025px;height:23px;background:#313335;"></div><div class="a" style="left:365px;top:1082px;width:1025px;height:1px;background:#3a3c3e;"></div><div class="t" style="left:434px;top:1087px;color:#bbbbbb;letter-spacing:-0.35px">ExpenseItem()</div><svg style="left:520px;top:1091px" width="4" height="7" viewBox="0 0 4 7"><path d="M0.500 0.500L3.500 3.500L0.500 6.500" fill="none" stroke="#6e7173" stroke-width="1"/></svg><div class="t" style="left:533px;top:1087px;color:#a8a83c;">div</div><svg style="left:560px;top:1091px" width="4" height="7" viewBox="0 0 4 7"><path d="M0.500 0.500L3.500 3.500L0.500 6.500" fill="none" stroke="#6e7173" stroke-width="1"/></svg><div class="t" style="left:573px;top:1087px;color:#c75450;">div</div><div class="a" style="left:1391px;top:84px;width:1148px;height:998px;background:#2b2b2b;"></div><div class="a" style="left:1390px;top:84px;width:1px;height:1021px;background:#555555;"></div><div class="a" style="left:1391px;top:84px;width:59px;height:998px;background:#313335;"></div><div class="a" style="left:1391px;top:503px;width:1148px;height:22px;background:#323232;"></div><div class="a" style="left:1441px;top:85px;width:9px;height:396px;background:#384c38;"></div><div class="a" style="left:1441px;top:481px;width:9px;height:22px;background:#4e483a;"></div><div class="a" style="left:1441px;top:503px;width:9px;height:484px;background:#374854;"></div><div class="a" style="left:1441px;top:987px;width:9px;height:44px;background:#4e483a;"></div><div class="a" style="left:1450px;top:84px;width:1px;height:998px;background:#555555;"></div><div class="a" style="left:1552px;top:547px;width:987px;height:22px;background:#52503a;"></div><div class="a" style="left:1456px;top:569px;width:1083px;height:66px;background:#52503a;"></div><div class="a" style="left:1456px;top:635px;width:216px;height:22px;background:#52503a;"></div><div class="a" style="left:1552px;top:657px;width:987px;height:22px;background:#52503a;"></div><div class="a" style="left:1456px;top:679px;width:1083px;height:66px;background:#52503a;"></div><div class="a" style="left:1456px;top:745px;width:216px;height:22px;background:#52503a;"></div><div class="a" style="left:1552px;top:767px;width:987px;height:22px;background:#52503a;"></div><div class="a" style="left:1456px;top:789px;width:1083px;height:66px;background:#52503a;"></div><div class="a" style="left:1456px;top:855px;width:216px;height:22px;background:#52503a;"></div><div class="a" style="left:1552px;top:877px;width:987px;height:22px;background:#52503a;"></div><div class="a" style="left:1456px;top:899px;width:1083px;height:66px;background:#52503a;"></div><div class="a" style="left:1456px;top:965px;width:216px;height:22px;background:#52503a;"></div><div class="a" style="left:1520px;top:503px;width:40px;height:22px;background:#3b514d;"></div><div class="a" style="left:1520px;top:987px;width:48px;height:22px;background:#3b514d;"></div><div class="a" style="left:1486px;top:85px;width:1px;height:352px;background:#373737;"></div><div class="a" style="left:1518px;top:85px;width:1px;height:66px;background:#373737;"></div><div class="a" style="left:1518px;top:195px;width:1px;height:88px;background:#373737;"></div><div class="a" style="left:1518px;top:327px;width:1px;height:88px;background:#373737;"></div><div class="a" style="left:1486px;top:503px;width:1px;height:22px;background:#373737;"></div><div class="a" style="left:1486px;top:525px;width:1px;height:22px;background:#373737;"></div><div class="a" style="left:1518px;top:525px;width:1px;height:22px;background:#373737;"></div><div class="a" style="left:1486px;top:547px;width:1px;height:22px;background:#373737;"></div><div class="a" style="left:1518px;top:547px;width:1px;height:22px;background:#373737;"></div><div class="a" style="left:1486px;top:569px;width:1px;height:22px;background:rgba(20,20,20,0.35);"></div><div class="a" style="left:1518px;top:569px;width:1px;height:22px;background:rgba(20,20,20,0.35);"></div><div class="a" style="left:1486px;top:591px;width:1px;height:22px;background:rgba(20,20,20,0.35);"></div><div class="a" style="left:1518px;top:591px;width:1px;height:22px;background:rgba(20,20,20,0.35);"></div><div class="a" style="left:1486px;top:613px;width:1px;height:22px;background:rgba(20,20,20,0.35);"></div><div class="a" style="left:1518px;top:613px;width:1px;height:22px;background:rgba(20,20,20,0.35);"></div><div class="a" style="left:1486px;top:635px;width:1px;height:22px;background:rgba(20,20,20,0.35);"></div><div class="a" style="left:1518px;top:635px;width:1px;height:22px;background:rgba(20,20,20,0.35);"></div><div class="a" style="left:1486px;top:657px;width:1px;height:22px;background:#373737;"></div><div class="a" style="left:1518px;top:657px;width:1px;height:22px;background:#373737;"></div><div class="a" style="left:1486px;top:679px;width:1px;height:22px;background:rgba(20,20,20,0.35);"></div><div class="a" style="left:1518px;top:679px;width:1px;height:22px;background:rgba(20,20,20,0.35);"></div><div class="a" style="left:1486px;top:701px;width:1px;height:22px;background:rgba(20,20,20,0.35);"></div><div class="a" style="left:1518px;top:701px;width:1px;height:22px;background:rgba(20,20,20,0.35);"></div><div class="a" style="left:1486px;top:723px;width:1px;height:22px;background:rgba(20,20,20,0.35);"></div><div class="a" style="left:1518px;top:723px;width:1px;height:22px;background:rgba(20,20,20,0.35);"></div><div class="a" style="left:1486px;top:745px;width:1px;height:22px;background:rgba(20,20,20,0.35);"></div><div class="a" style="left:1518px;top:745px;width:1px;height:22px;background:rgba(20,20,20,0.35);"></div><div class="a" style="left:1486px;top:767px;width:1px;height:22px;background:#373737;"></div><div class="a" style="left:1518px;top:767px;width:1px;height:22px;background:#373737;"></div><div class="a" style="left:1486px;top:789px;width:1px;height:22px;background:rgba(20,20,20,0.35);"></div><div class="a" style="left:1518px;top:789px;width:1px;height:22px;background:rgba(20,20,20,0.35);"></div><div class="a" style="left:1486px;top:811px;width:1px;height:22px;background:rgba(20,20,20,0.35);"></div><div class="a" style="left:1518px;top:811px;width:1px;height:22px;background:rgba(20,20,20,0.35);"></div><div class="a" style="left:1486px;top:833px;width:1px;height:22px;background:rgba(20,20,20,0.35);"></div><div class="a" style="left:1518px;top:833px;width:1px;height:22px;background:rgba(20,20,20,0.35);"></div><div class="a" style="left:1486px;top:855px;width:1px;height:22px;background:rgba(20,20,20,0.35);"></div><div class="a" style="left:1518px;top:855px;width:1px;height:22px;background:rgba(20,20,20,0.35);"></div><div class="a" style="left:1486px;top:877px;width:1px;height:22px;background:#373737;"></div><div class="a" style="left:1518px;top:877px;width:1px;height:22px;background:#373737;"></div><div class="a" style="left:1486px;top:899px;width:1px;height:22px;background:rgba(20,20,20,0.35);"></div><div class="a" style="left:1518px;top:899px;width:1px;height:22px;background:rgba(20,20,20,0.35);"></div><div class="a" style="left:1486px;top:921px;width:1px;height:22px;background:rgba(20,20,20,0.35);"></div><div class="a" style="left:1518px;top:921px;width:1px;height:22px;background:rgba(20,20,20,0.35);"></div><div class="a" style="left:1486px;top:943px;width:1px;height:22px;background:rgba(20,20,20,0.35);"></div><div class="a" style="left:1518px;top:943px;width:1px;height:22px;background:rgba(20,20,20,0.35);"></div><div class="a" style="left:1486px;top:965px;width:1px;height:22px;background:rgba(20,20,20,0.35);"></div><div class="a" style="left:1518px;top:965px;width:1px;height:22px;background:rgba(20,20,20,0.35);"></div><div class="a" style="left:1486px;top:987px;width:1px;height:22px;background:#373737;"></div><div class="a" style="left:1550px;top:569px;width:1px;height:66px;background:rgba(20,20,20,0.4);"></div><div class="a" style="left:1550px;top:679px;width:1px;height:66px;background:rgba(20,20,20,0.4);"></div><div class="a" style="left:1550px;top:789px;width:1px;height:66px;background:rgba(20,20,20,0.4);"></div><div class="a" style="left:1550px;top:899px;width:1px;height:66px;background:rgba(20,20,20,0.4);"></div><div class="a" style="left:2416px;top:84px;width:1px;height:998px;background:rgba(255,255,255,0.17);"></div><div class="a" style="left:1391px;top:85px;width:1148px;height:997px;overflow:hidden"><div class="ln" style="left:-20px;top:0px;width:40px;color:#606366">13</div><div class="cl" style="left:65px;top:0px">            <span class="p">title</span>: <span class="s">'New TV'</span><span class="k">,</span></div><div class="ln" style="left:-20px;top:22px;width:40px;color:#606366">14</div><div class="cl" style="left:65px;top:22px">            <span class="p">amount</span>: <span class="n">799.49</span><span class="k">,</span></div><div class="ln" style="left:-20px;top:44px;width:40px;color:#606366">15</div><div class="cl" style="left:65px;top:44px">            <span class="p">date</span>: <span class="k">new </span><span class="g">Date</span>(<span class="h" style="width:35px">year:</span><span class="n">2021</span><span class="k">,</span> <span class="h" style="width:49px">month:</span><span class="n">2</span><span class="k">,</span> <span class="h" style="width:36px">date:</span><span class="n">12</span>)</div><div class="ln" style="left:-20px;top:66px;width:40px;color:#606366">16</div><div class="cl" style="left:65px;top:66px">        }<span class="k">,</span></div><div class="ln" style="left:-20px;top:88px;width:40px;color:#606366">17</div><div class="cl" style="left:65px;top:88px">        {</div><div class="ln" style="left:-20px;top:110px;width:40px;color:#606366">18</div><div class="cl" style="left:65px;top:110px">            <span class="p">id</span>: <span class="s">'e3'</span><span class="k">,</span></div><div class="ln" style="left:-20px;top:132px;width:40px;color:#606366">19</div><div class="cl" style="left:65px;top:132px">            <span class="p">title</span>: <span class="s">'Car Insurance'</span><span class="k">,</span></div><div class="ln" style="left:-20px;top:154px;width:40px;color:#606366">20</div><div class="cl" style="left:65px;top:154px">            <span class="p">amount</span>: <span class="n">294.67</span><span class="k">,</span></div><div class="ln" style="left:-20px;top:176px;width:40px;color:#606366">21</div><div class="cl" style="left:65px;top:176px">            <span class="p">date</span>: <span class="k">new </span><span class="g">Date</span>(<span class="h" style="width:35px">year:</span><span class="n">2021</span><span class="k">,</span> <span class="h" style="width:49px">month:</span><span class="n">2</span><span class="k">,</span> <span class="h" style="width:36px">date:</span><span class="n">28</span>)<span class="k">,</span></div><div class="ln" style="left:-20px;top:198px;width:40px;color:#606366">22</div><div class="cl" style="left:65px;top:198px">        }<span class="k">,</span></div><div class="ln" style="left:-20px;top:220px;width:40px;color:#606366">23</div><div class="cl" style="left:65px;top:220px">        {</div><div class="ln" style="left:-20px;top:242px;width:40px;color:#606366">24</div><div class="cl" style="left:65px;top:242px">            <span class="p">id</span>: <span class="s">'e4'</span><span class="k">,</span></div><div class="ln" style="left:-20px;top:264px;width:40px;color:#606366">25</div><div class="cl" style="left:65px;top:264px">            <span class="p">title</span>: <span class="s">'New Desk (Wooden)'</span><span class="k">,</span></div><div class="ln" style="left:-20px;top:286px;width:40px;color:#606366">26</div><div class="cl" style="left:65px;top:286px">            <span class="p">amount</span>: <span class="n">450</span><span class="k">,</span></div><div class="ln" style="left:-20px;top:308px;width:40px;color:#606366">27</div><div class="cl" style="left:65px;top:308px">            <span class="p">date</span>: <span class="k">new </span><span class="g">Date</span>(<span class="h" style="width:35px">year:</span><span class="n">2021</span><span class="k">,</span> <span class="h" style="width:49px">month:</span><span class="n">5</span><span class="k">,</span> <span class="h" style="width:36px">date:</span><span class="n">12</span>)<span class="k">,</span></div><div class="ln" style="left:-20px;top:330px;width:40px;color:#606366">28</div><div class="cl" style="left:65px;top:330px">        }<span class="k">,</span></div><div class="ln" style="left:-20px;top:352px;width:40px;color:#606366">29</div><div class="cl" style="left:65px;top:352px">    ]<span class="k">;</span></div><div class="ln" style="left:-20px;top:374px;width:40px;color:#606366">30</div><div class="ln" style="left:-20px;top:396px;width:40px;color:#606366">31</div><div class="cl" style="left:65px;top:396px">    <span class="k">return </span>(</div><div class="ln" style="left:-20px;top:418px;width:40px;color:#a4a3a3">32</div><div class="cl" style="left:65px;top:418px">        <span class="tg">&lt;div&gt;</span></div><div class="ln" style="left:-20px;top:440px;width:40px;color:#606366">33</div><div class="cl" style="left:65px;top:440px">            <span class="tg">&lt;h2&gt;</span>Let's get started!<span class="tg">&lt;/h2&gt;</span></div><div class="ln" style="left:-20px;top:462px;width:40px;color:#606366">34</div><div class="cl" style="left:65px;top:462px">            <span class="tg">&lt;ExpenseItem</span></div><div class="ln" style="left:-20px;top:484px;width:40px;color:#606366">35</div><div class="cl" style="left:65px;top:484px">                <span class="at">title</span><span class="s">=</span>{expenses[<span class="n">0</span>].<span class="p">title</span>}</div><div class="ln" style="left:-20px;top:506px;width:40px;color:#606366">36</div><div class="cl" style="left:65px;top:506px">                <span class="at">amount</span><span class="s">=</span>{expenses[<span class="n">0</span>].<span class="p">amount</span>}</div><div class="ln" style="left:-20px;top:528px;width:40px;color:#606366">37</div><div class="cl" style="left:65px;top:528px">                <span class="at">date</span><span class="s">=</span>{expenses[<span class="n">0</span>].<span class="p">date</span>}</div><div class="ln" style="left:-20px;top:550px;width:40px;color:#606366">38</div><div class="cl" style="left:65px;top:550px">            <span class="tg">&gt;&lt;/ExpenseItem&gt;</span></div><div class="ln" style="left:-20px;top:572px;width:40px;color:#606366">39</div><div class="cl" style="left:65px;top:572px">            <span class="tg">&lt;ExpenseItem</span></div><div class="ln" style="left:-20px;top:594px;width:40px;color:#606366">40</div><div class="cl" style="left:65px;top:594px">                <span class="at">title</span><span class="s">=</span>{expenses[<span class="n">1</span>].<span class="p">title</span>}</div><div class="ln" style="left:-20px;top:616px;width:40px;color:#606366">41</div><div class="cl" style="left:65px;top:616px">                <span class="at">amount</span><span class="s">=</span>{expenses[<span class="n">1</span>].<span class="p">amount</span>}</div><div class="ln" style="left:-20px;top:638px;width:40px;color:#606366">42</div><div class="cl" style="left:65px;top:638px">                <span class="at">date</span><span class="s">=</span>{expenses[<span class="n">1</span>].<span class="p">date</span>}</div><div class="ln" style="left:-20px;top:660px;width:40px;color:#606366">43</div><div class="cl" style="left:65px;top:660px">            <span class="tg">&gt;&lt;/ExpenseItem&gt;</span></div><div class="ln" style="left:-20px;top:682px;width:40px;color:#606366">44</div><div class="cl" style="left:65px;top:682px">            <span class="tg">&lt;ExpenseItem</span></div><div class="ln" style="left:-20px;top:704px;width:40px;color:#606366">45</div><div class="cl" style="left:65px;top:704px">                <span class="at">title</span><span class="s">=</span>{expenses[<span class="n">2</span>].<span class="p">title</span>}</div><div class="ln" style="left:-20px;top:726px;width:40px;color:#606366">46</div><div class="cl" style="left:65px;top:726px">                <span class="at">amount</span><span class="s">=</span>{expenses[<span class="n">2</span>].<span class="p">amount</span>}</div><div class="ln" style="left:-20px;top:748px;width:40px;color:#606366">47</div><div class="cl" style="left:65px;top:748px">                <span class="at">date</span><span class="s">=</span>{expenses[<span class="n">2</span>].<span class="p">date</span>}</div><div class="ln" style="left:-20px;top:770px;width:40px;color:#606366">48</div><div class="cl" style="left:65px;top:770px">            <span class="tg">&gt;&lt;/ExpenseItem&gt;</span></div><div class="ln" style="left:-20px;top:792px;width:40px;color:#606366">49</div><div class="cl" style="left:65px;top:792px">            <span class="tg">&lt;ExpenseItem</span></div><div class="ln" style="left:-20px;top:814px;width:40px;color:#606366">50</div><div class="cl" style="left:65px;top:814px">                <span class="at">title</span><span class="s">=</span>{expenses[<span class="n">3</span>].<span class="p">title</span>}</div><div class="ln" style="left:-20px;top:836px;width:40px;color:#606366">51</div><div class="cl" style="left:65px;top:836px">                <span class="at">amount</span><span class="s">=</span>{expenses[<span class="n">3</span>].<span class="p">amount</span>}</div><div class="ln" style="left:-20px;top:858px;width:40px;color:#606366">52</div><div class="cl" style="left:65px;top:858px">                <span class="at">date</span><span class="s">=</span>{expenses[<span class="n">3</span>].<span class="p">date</span>}</div><div class="ln" style="left:-20px;top:880px;width:40px;color:#606366">53</div><div class="cl" style="left:65px;top:880px">            <span class="tg">&gt;&lt;/ExpenseItem&gt;</span></div><div class="ln" style="left:-20px;top:902px;width:40px;color:#606366">54</div><div class="cl" style="left:65px;top:902px">        <span class="tg">&lt;/div&gt;</span></div><div class="ln" style="left:-20px;top:924px;width:40px;color:#606366">55</div><div class="cl" style="left:65px;top:924px">    )<span class="k">;</span></div><div class="ln" style="left:-20px;top:946px;width:40px;color:#606366">56</div><div class="cl" style="left:65px;top:946px">}</div><div class="ln" style="left:-20px;top:968px;width:40px;color:#606366">57</div><div class="cl" style="left:65px;top:990px"><span class="k">export default </span><span class="f">App</span><span class="k">;</span></div></div><svg style="left:1446px;top:180px" width="9" height="12" viewBox="0 0 9 12"><path d="M0.500 0.500h8v7L4.500 11.300L0.500 7.500z" fill="#2b2b2b" stroke="#606366" stroke-width="1"/><path d="M2.500 4.500h4" stroke="#606366" stroke-width="1"/></svg><svg style="left:1446px;top:312px" width="9" height="12" viewBox="0 0 9 12"><path d="M0.500 0.500h8v7L4.500 11.300L0.500 7.500z" fill="#2b2b2b" stroke="#606366" stroke-width="1"/><path d="M2.500 4.500h4" stroke="#606366" stroke-width="1"/></svg><svg style="left:1446px;top:510px" width="9" height="12" viewBox="0 0 9 12"><path d="M0.500 0.500h8v7L4.500 11.300L0.500 7.500z" fill="#2b2b2b" stroke="#606366" stroke-width="1"/><path d="M2.500 4.500h4" stroke="#606366" stroke-width="1"/></svg><svg style="left:1446px;top:155px" width="9" height="12" viewBox="0 0 9 12"><path d="M0.500 11.500h8v-7L4.500 0.700L0.500 4.500z" fill="#2b2b2b" stroke="#606366" stroke-width="1"/><path d="M2.500 7.500h4" stroke="#606366" stroke-width="1"/></svg><svg style="left:1446px;top:287px" width="9" height="12" viewBox="0 0 9 12"><path d="M0.500 11.500h8v-7L4.500 0.700L0.500 4.500z" fill="#2b2b2b" stroke="#606366" stroke-width="1"/><path d="M2.500 7.500h4" stroke="#606366" stroke-width="1"/></svg><svg style="left:1446px;top:419px" width="9" height="12" viewBox="0 0 9 12"><path d="M0.500 11.500h8v-7L4.500 0.700L0.500 4.500z" fill="#2b2b2b" stroke="#606366" stroke-width="1"/><path d="M2.500 7.500h4" stroke="#606366" stroke-width="1"/></svg><svg style="left:1446px;top:441px" width="9" height="12" viewBox="0 0 9 12"><path d="M0.500 11.500h8v-7L4.500 0.700L0.500 4.500z" fill="#2b2b2b" stroke="#606366" stroke-width="1"/><path d="M2.500 7.500h4" stroke="#606366" stroke-width="1"/></svg><svg style="left:1446px;top:991px" width="9" height="12" viewBox="0 0 9 12"><path d="M0.500 11.500h8v-7L4.500 0.700L0.500 4.500z" fill="#2b2b2b" stroke="#606366" stroke-width="1"/><path d="M2.500 7.500h4" stroke="#606366" stroke-width="1"/></svg><svg style="left:1446px;top:1035px" width="9" height="12" viewBox="0 0 9 12"><path d="M0.500 11.500h8v-7L4.500 0.700L0.500 4.500z" fill="#2b2b2b" stroke="#606366" stroke-width="1"/><path d="M2.500 7.500h4" stroke="#606366" stroke-width="1"/></svg><svg style="left:2470px;top:92px" width="12" height="11" viewBox="0 0 12 11"><path d="M6 0L12 11H0z" fill="#d9a62e"/><path d="M6 3.500v3.800M6 8.300v1.600" stroke="#2b2b2b" stroke-width="1.800"/></svg><div class="t" style="left:2485px;top:90px;color:#bbbbbb;">4</div><svg style="left:2501px;top:95px" width="9" height="5" viewBox="0 0 9 5"><path d="M0.500 4.500L4.500 0.700L8.500 4.500" fill="none" stroke="#afb1b3" stroke-width="1.400"/></svg><svg style="left:2522px;top:95px" width="9" height="5" viewBox="0 0 9 5"><path d="M0.500 0.500L4.500 4.300L8.500 0.500" fill="none" stroke="#afb1b3" stroke-width="1.400"/></svg><div class="a" style="left:2521px;top:111px;width:2px;height:4px;background:#4a76a8;"></div><div class="a" style="left:2521px;top:156px;width:2px;height:774px;background:#4a76a8;"></div><div class="a" style="left:2525px;top:611px;width:14px;height:61px;background:#be9117;"></div><div class="a" style="left:2525px;top:687px;width:14px;height:61px;background:#be9117;"></div><div class="a" style="left:2525px;top:763px;width:14px;height:61px;background:#be9117;"></div><div class="a" style="left:2525px;top:839px;width:14px;height:61px;background:#be9117;"></div><div class="a" style="left:2530px;top:294px;width:9px;height:684px;background:rgba(166,166,166,0.28);"></div><div class="a" style="left:366px;top:82px;width:129px;height:3px;background:#4a88c7;"></div><div class="a" style="left:1392px;top:82px;width:84px;height:3px;background:#7a7e80;"></div><div class="a" style="left:1391px;top:1082px;width:1148px;height:23px;background:#313335;"></div><div class="a" style="left:1391px;top:1082px;width:1148px;height:1px;background:#3a3c3e;"></div><div class="t" style="left:1460px;top:1087px;color:#bbbbbb;">App()</div><svg style="left:1501px;top:1091px" width="4" height="7" viewBox="0 0 4 7"><path d="M0.500 0.500L3.500 3.500L0.500 6.500" fill="none" stroke="#6e7173" stroke-width="1"/></svg><div class="t" style="left:1514px;top:1087px;color:#bbbbbb;">div</div><div class="a" style="left:2539px;top:58px;width:22px;height:1300px;background:#3c3f41;"></div><svg style="left:2544px;top:67px" width="13" height="14" viewBox="0 0 13 14"><ellipse cx="6.500" cy="2.500" rx="6" ry="2.500" fill="#afb1b3"/><path d="M0.500 4.500c0 3 12 3 12 0v2c0 3-12 3-12 0z M0.500 8c0 3 12 3 12 0v2c0 3-12 3-12 0z M0.500 11.500c0 3 12 3 12 0v0.500c0 2.800-12 2.800-12 0z" fill="#afb1b3"/></svg><div class="a" style="left:2539px;top:58px;width:1px;height:1300px;background:#323232;"></div><div class="t" style="left:2550px;top:85px;color:#bbbbbb;transform-origin:0 0;transform:rotate(90deg) translateY(-8px);font-size:11px">Database</div><div class="a" style="left:22px;top:1106px;width:2517px;height:27px;background:#3c3f41;"></div><div class="a" style="left:22px;top:1105px;width:2517px;height:1px;background:#323232;"></div><div class="t" style="left:28px;top:1112px;color:#bbbbbb;">Terminal:</div><div class="t" style="left:96px;top:1112px;color:#bbbbbb;">Local</div><div class="a" style="left:84px;top:1130px;width:66px;height:3px;background:#747a80;"></div><svg style="left:131px;top:1116px" width="8" height="8" viewBox="0 0 8 8"><path d="M0.500 0.500L7.500 7.500M7.500 0.500L0.500 7.500" stroke="#6e7173" stroke-width="1.100" fill="none"/></svg><svg style="left:160px;top:1114px" width="10" height="10" viewBox="0 0 10 10"><path d="M5 0v10M0 5h10" stroke="#afb1b3" stroke-width="1.600"/></svg><svg style="left:2493px;top:1112px" width="14" height="14" viewBox="0 0 14 14"><path d="M5.67 2.60L5.69 0.84L8.31 0.84L8.33 2.60L10.15 3.65L11.68 2.78L12.99 5.05L11.48 5.95L11.48 8.05L12.99 8.95L11.68 11.22L10.15 10.35L8.33 11.40L8.31 13.16L5.69 13.16L5.67 11.40L3.85 10.35L2.32 11.22L1.01 8.95L2.52 8.05L2.52 5.95L1.01 5.05L2.32 2.78L3.85 3.65z" fill="#afb1b3" stroke="#afb1b3" stroke-width="0.8" stroke-linejoin="round"/><circle cx="7" cy="7" r="2.1" fill="#3c3f41"/></svg><div class="a" style="left:2520px;top:1118px;width:12px;height:2px;background:#afb1b3;"></div><div class="a" style="left:22px;top:1133px;width:2517px;height:225px;background:#2b2b2b;"></div><div class="cl" style="left:26px;top:1155px;color:#bbbbbb">src\components\ExpenseItem.js</div><div class="cl" style="left:26px;top:1177px;color:#bbbbbb">  <b>Line 4:11:</b>  'expenseDate' is assigned a value but never used    <span style="color:#b39b27;text-decoration:underline;text-decoration-thickness:1px;text-underline-offset:3px">no-unused-vars</span></div><div class="cl" style="left:26px;top:1199px;color:#bbbbbb">  <b>Line 5:11:</b>  'expenseTitle' is assigned a value but never used   <span style="color:#b39b27;text-decoration:underline;text-decoration-thickness:1px;text-underline-offset:3px">no-unused-vars</span></div><div class="cl" style="left:26px;top:1221px;color:#bbbbbb">  <b>Line 6:11:</b>  'expenseAmount' is assigned a value but never used  <span style="color:#b39b27;text-decoration:underline;text-decoration-thickness:1px;text-underline-offset:3px">no-unused-vars</span></div><div class="cl" style="left:26px;top:1265px;color:#bbbbbb">Search for the <span style="color:#b39b27;text-decoration:underline;text-decoration-thickness:1px;text-underline-offset:3px">keywords</span> to learn more about each warning.</div><div class="cl" style="left:26px;top:1287px;color:#bbbbbb">To ignore, add <span style="color:#00a3a3">// eslint-disable-next-line</span> to the line before.</div><div class="a" style="left:26px;top:1331px;width:9px;height:23px;border:1px solid #bbbbbb"></div><div class="a" style="left:2530px;top:1338px;width:8px;height:18px;background:#4d4d4d;"></div><div class="a" style="left:0px;top:1358px;width:2561px;height:22px;background:#3c3f41;"></div><div class="a" style="left:0px;top:1357px;width:2561px;height:1px;background:#323232;"></div><div class="a" style="left:224px;top:1358px;width:82px;height:22px;background:#2d2f30;"></div><svg style="left:32px;top:1364px" width="11" height="12" viewBox="0 0 11 12"><path d="M1 0v11.500M1 7.600h5.900V4" fill="none" stroke="#afb1b3" stroke-width="1.700"/><path d="M3.500 5L6.900 0.300l3.400 4.700z" fill="#afb1b3"/></svg><div class="t" style="left:47px;top:1362px;letter-spacing:-0.2px">Git</div><svg style="left:83px;top:1365px" width="10" height="9" viewBox="0 0 10 9"><path d="M0 1h2M3.500 1H10M0 4.500h2M3.500 4.500H10M0 8h2M3.500 8H10" stroke="#afb1b3" stroke-width="1.600"/></svg><div class="t" style="left:97px;top:1362px;letter-spacing:-0.5px">TODO</div><svg style="left:152px;top:1364px" width="10" height="10" viewBox="0 0 10 10"><circle cx="5" cy="5" r="5" fill="#afb1b3"/><path d="M5 2v3.600M5 6.800v1.400" stroke="#3c3f41" stroke-width="1.400"/></svg><div class="t" style="left:167px;top:1362px;letter-spacing:-0.45px">Problems</div><svg style="left:236px;top:1365px" width="11" height="9" viewBox="0 0 11 9"><rect width="11" height="9" fill="#c4c6c7"/><path d="M1.500 2l2.500 2-2.500 2" fill="none" stroke="#2d2f30" stroke-width="1.100"/><path d="M5.500 7h4" stroke="#2d2f30" stroke-width="1.100"/></svg><div class="t" style="left:252px;top:1362px;color:#ffffff;letter-spacing:-0.2px">Terminal</div><svg style="left:318px;top:1364px" width="11" height="11" viewBox="0 0 11 11"><path d="M5.500 0.700A4.800 4.800 0 1 0 10.300 5.500H5.500z" fill="none" stroke="#7f8284" stroke-width="1.300"/><path d="M7 0.300A4.800 4.800 0 0 1 10.800 4H7z" fill="#7f8284"/></svg><div class="t" style="left:334px;top:1362px;letter-spacing:-0.2px">Statistic</div><svg style="left:2462px;top:1363px" width="13" height="13" viewBox="0 0 13 13"><path d="M6.500 0.700a5.800 5.800 0 1 0 5.800 5.800V12.300H6.500" fill="none" stroke="#afb1b3" stroke-width="1.400"/><path d="M6.500 0.700a5.800 5.800 0 0 1 5.800 5.800" fill="none" stroke="#afb1b3" stroke-width="1.400"/></svg><div class="t" style="left:2479px;top:1362px;letter-spacing:-0.45px">Event Log</div><div class="a" style="left:0px;top:1380px;width:2561px;height:20px;background:#3c3f41;"></div><div class="a" style="left:0px;top:1379px;width:2561px;height:1px;background:#323232;"></div><svg style="left:6px;top:1384px" width="12" height="12" viewBox="0 0 12 12"><path d="M3 0.500h9v9h-9z" fill="none" stroke="#afb1b3" stroke-width="1"/><path d="M0.500 3v9h9.500" fill="none" stroke="#afb1b3" stroke-width="1"/></svg><div class="t" style="left:2216px;top:1382px;color:#a9adb0;letter-spacing:-0.5px">PHP: 5.6</div><div class="t" style="left:2272px;top:1382px;color:#a9adb0;letter-spacing:-0.6px">10:50</div><div class="t" style="left:2311px;top:1382px;color:#a9adb0;letter-spacing:-1.1px">CRLF</div><div class="t" style="left:2350px;top:1382px;color:#a9adb0;letter-spacing:-0.6px">UTF-8</div><div class="t" style="left:2393px;top:1382px;color:#a9adb0;letter-spacing:-0.5px">4 spaces</div><svg style="left:2450px;top:1383px" width="9" height="13" viewBox="0 0 9 13"><path d="M2 0v13M2 9c0-2.500 5-1.500 5-5V1" fill="none" stroke="#afb1b3" stroke-width="1.700"/><circle cx="7" cy="2" r="1.700" fill="#afb1b3"/></svg><div class="t" style="left:2466px;top:1382px;color:#a9adb0;">master</div><svg style="left:2512px;top:1383px" width="12" height="12" viewBox="0 0 12 12"><rect x="3" y="5.500" width="8" height="6.500" fill="#afb1b3"/><path d="M1 5.500V3.500a2.300 2.300 0 0 1 4.600 0V5.500" fill="none" stroke="#afb1b3" stroke-width="1.400"/></svg><svg style="left:2535px;top:1382px" width="17" height="15" viewBox="0 0 17 15"><path d="M3.500 11a3.300 3.300 0 0 1 0.300-6.500A4.800 4.800 0 0 1 13 5a3.100 3.100 0 0 1 0.500 6z" fill="#afb1b3"/><circle cx="12.500" cy="11.500" r="3.800" fill="#3c3f41"/><circle cx="12.500" cy="11.500" r="1.800" fill="none" stroke="#afb1b3" stroke-width="1.500"/></svg><svg style="left:982px;top:-1px" width="13" height="21" viewBox="0 0 13 21"><path d="M0.600 0.500V16.600L4.300 13.200L7 19.300L9.300 18.300L6.600 12.300H11.800z" fill="#ffffff" stroke="#000000" stroke-width="0.900" stroke-linejoin="round"/></svg><div class="a" style="left:2560px;top:0px;width:1px;height:1400px;background:#000000;"></div><div class="a" style="left:2560px;top:1287px;width:1px;height:40px;background:#3d3824;"></div></body></html>
